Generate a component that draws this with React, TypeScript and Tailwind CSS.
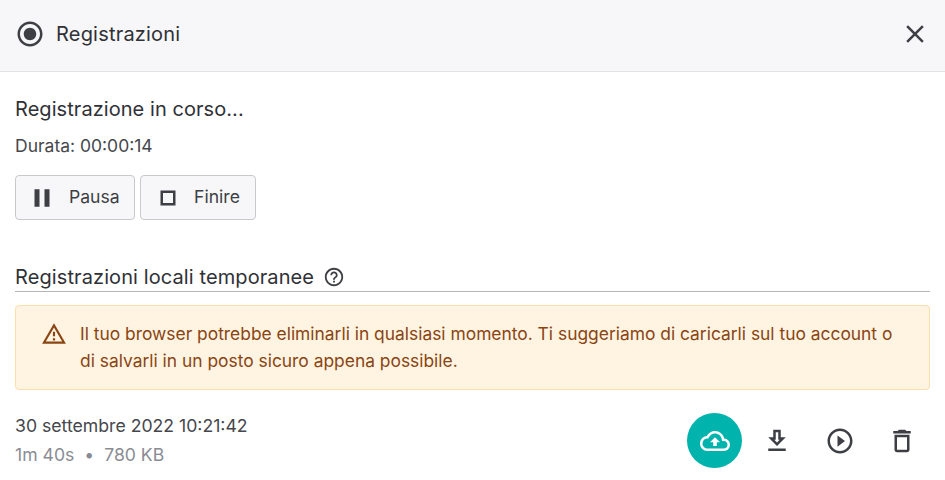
const ICONS = {
  record: "M12 7c-2.76 0-5 2.24-5 5s2.24 5 5 5 5-2.24 5-5-2.24-5-5-5zm0-5C6.48 2 2 6.48 2 12s4.48 10 10 10 10-4.48 10-10S17.52 2 12 2zm0 18c-4.42 0-8-3.58-8-8s3.58-8 8-8 8 3.58 8 8-3.58 8-8 8z",
  close: "M19 6.41L17.59 5 12 10.59 6.41 5 5 6.41 10.59 12 5 17.59 6.41 19 12 13.41 17.59 19 19 17.59 13.41 12z",
  pause: "M6 19h4V5H6v14zm8-14v14h4V5h-4z",
  stop: "M16 8v8H8V8h8m2-2H6v12h12V6z",
  help: "M11 18h2v-2h-2v2zm1-16C6.48 2 2 6.48 2 12s4.48 10 10 10 10-4.48 10-10S17.52 2 12 2zm0 18c-4.41 0-8-3.59-8-8s3.59-8 8-8 8 3.59 8 8-3.59 8-8 8zm0-14c-2.21 0-4 1.79-4 4h2c0-1.1.9-2 2-2s2 .9 2 2c0 2-3 1.75-3 5h2c0-2.25 3-2.5 3-5 0-2.21-1.79-4-4-4z",
  warning: "M12 5.99L19.53 19H4.47L12 5.99M12 2L1 21h22L12 2zm1 14h-2v2h2v-2zm0-6h-2v4h2v-4z",
  upload: "M19.35 10.04C18.67 6.59 15.64 4 12 4 9.11 4 6.6 5.64 5.35 8.04 2.34 8.36 0 10.91 0 14c0 3.31 2.69 6 6 6h13c2.76 0 5-2.24 5-5 0-2.64-2.05-4.78-4.65-4.96zM19 18H6c-2.21 0-4-1.79-4-4 0-2.05 1.53-3.76 3.56-3.97l1.07-.11.5-.95C8.08 7.14 9.94 6 12 6c2.62 0 4.88 1.86 5.39 4.43l.3 1.5 1.53.11c1.56.1 2.78 1.41 2.78 2.96 0 1.65-1.35 3-3 3zM8 13h2.55v3h2.9v-3H16l-4-4z",
  download: "M19 9h-4V3H9v6H5l7 7 7-7zm-8 2V5h2v6h1.17L12 13.17 9.83 11H11zm-6 7h14v2H5z",
  play: "M10 16.5l6-4.5-6-4.5v9zM12 2C6.48 2 2 6.48 2 12s4.48 10 10 10 10-4.48 10-10S17.52 2 12 2zm0 18c-4.41 0-8-3.59-8-8s3.59-8 8-8 8 3.59 8 8-3.59 8-8 8z",
  trash: "M16 9v10H8V9h8m-1.5-6h-5l-1 1H5v2h14V4h-3.5l-1-1zM18 7H6v12c0 1.1.9 2 2 2h8c1.1 0 2-.9 2-2V7z",
};

function Icon({ d, className }: { d: string; className: string }) {
  return (
    <svg viewBox="0 0 24 24" fill="currentColor" className={className}>
      <path d={d} />
    </svg>
  );
}

export default function App() {
  return (
    <div className="w-[945px] h-[480px] overflow-hidden bg-white font-['Inter',sans-serif] text-[#45474c]">
      {/* Header */}
      <div className="h-[72px] flex items-center justify-between px-[15px] pb-[3px] bg-[#f7f7f9] border-b border-[#e2e2e4]">
        <div className="flex items-center gap-[11px]">
          <Icon d={ICONS.record} className="w-[30px] h-[30px] text-[#3d3f44]" />
          <span className="text-[20px] tracking-[0.2px] text-[#2f3136]">Registrazioni</span>
        </div>
        <Icon d={ICONS.close} className="w-[30px] h-[30px] text-[#3d3f44]" />
      </div>

      <div className="px-[15px]">
        <div className="mt-[25px] text-[20px] leading-[24px] tracking-[0.06px] text-[#2f3136]">Registrazione in corso...</div>
        <div className="mt-[13px] text-[17.5px] leading-[24px]">Durata: 00:00:14</div>

        <div className="mt-[17px] flex gap-[5px] text-[#3d3f44]">
          <button className="w-[120px] h-[45px] flex items-center pl-[11px] gap-[12px] bg-[#f7f7f9] border border-[#c9c9cc] rounded-[4px] text-[17.6px]">
            <Icon d={ICONS.pause} className="w-[30px] h-[30px]" />
            Pausa
          </button>
          <button className="w-[116px] h-[45px] flex items-center pl-[12px] gap-[11px] bg-[#f7f7f9] border border-[#c9c9cc] rounded-[4px] text-[17.6px]">
            <Icon d={ICONS.stop} className="w-[30px] h-[30px]" />
            Finire
          </button>
        </div>

        {/* Local recordings */}
        <div className="mt-[43px] h-[29px] flex items-center gap-[9px] border-b border-[#b5b5b8]">
          <span className="text-[20px] tracking-[0.1px] text-[#2f3136]">Registrazioni locali temporanee</span>
          <Icon d={ICONS.help} className="w-[22px] h-[22px] text-[#3d3f44]" />
        </div>

        <div className="mt-[13px] h-[85px] flex items-start pl-[25px] pt-[14px] bg-[#fff4e2] border border-[#fbdfa9] rounded-[4px] text-[#8a4513]">
          <Icon d={ICONS.warning} className="w-[26px] h-[26px] shrink-0 mt-[1px]" />
          <p className="ml-[13px] w-[830px] text-[17.4px] leading-[27px]">
            Il tuo browser potrebbe eliminarli in qualsiasi momento. Ti suggeriamo di caricarli sul tuo account o di salvarli in un posto sicuro appena possibile.
          </p>
        </div>

        <div className="mt-[23px] flex items-center justify-between">
          <div>
            <div className="text-[17.65px] leading-[24px]">30 settembre 2022 10:21:42</div>
            <div className="mt-[5px] text-[17.6px] leading-[24px] text-[#8a8c94]">1m 40s<span className="mx-[10px]">•</span>780 KB</div>
          </div>
          <div className="flex items-center mr-[13px] text-[#3d3f44]">
            <button className="w-[55px] h-[55px] rounded-full bg-[#00b3ac] text-white flex items-center justify-center">
              <Icon d={ICONS.upload} className="w-[30px] h-[30px]" />
            </button>
            <Icon d={ICONS.download} className="ml-[20px] w-[30px] h-[30px]" />
            <Icon d={ICONS.play} className="ml-[33px] w-[30px] h-[30px]" />
            <Icon d={ICONS.trash} className="ml-[32px] w-[30px] h-[30px]" />
          </div>
        </div>
      </div>
    </div>
  );
}
